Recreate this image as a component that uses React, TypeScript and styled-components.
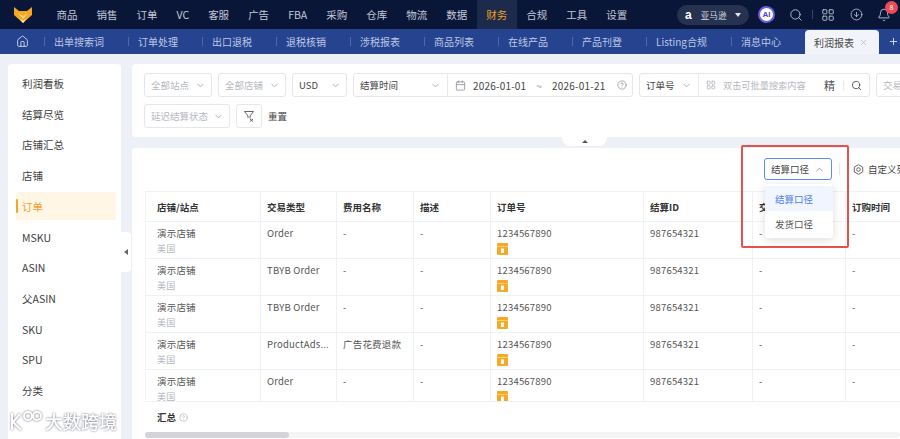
import React from 'react';
import styled, { createGlobalStyle } from 'styled-components';
import { House, X, Plus, ChevronDown, ChevronUp, Calendar, CircleHelp, Search, LayoutGrid, CircleArrowDown, Bell } from 'lucide-react';

const Global = createGlobalStyle`
  html, body { margin: 0; padding: 0; height: 439px; overflow: hidden; background: #eef0f8; }
  * { box-sizing: border-box; }
  body { font-family: "Noto Sans CJK SC", "Noto Sans", sans-serif; font-size: 10px; color: #333; }
`;

const Page = styled.div`
  width: 900px; height: 439px; display: flex; flex-direction: column; overflow: hidden; position: relative;
`;
const TopBar = styled.header`
  height: 29px; flex: none; display: flex; align-items: center; background: #0a1638; color: #c3c9d8;
`;
const Logo = styled.div`
  width: 47px; padding-left: 13px; flex: none; display: flex; align-items: center;
`;
const NavItem = styled.div<{ $active?: boolean }>`
  height: 29px; display: flex; align-items: center; padding: 0 9.5px; font-size: 10.5px; white-space: nowrap;
  color: ${p => (p.$active ? '#f0a11f' : '#c3c9d8')};
  background: ${p => (p.$active ? '#1c2a4c' : 'transparent')};
`;
const TopRight = styled.div`
  margin-left: auto; display: flex; align-items: center; padding-right: 1px; color: #c3c9d8;
`;
const Market = styled.div`
  width: 72px; height: 20px; border-radius: 10px; background: #26324f; display: flex; align-items: center;
  padding-left: 8px; gap: 9px; font-size: 8.6px; color: #d5d9e4; margin-right: 9px;
`;
const AmazonA = styled.span`
  font-family: "Liberation Sans", sans-serif; font-size: 12px; font-weight: 700; color: #fff; line-height: 12px;
`;
const Caret = styled.span`
  width: 0; height: 0; border: 3px solid transparent; border-top: 4px solid #e2e5ee; border-bottom: 0;
`;
const AiBadge = styled.div`
  width: 17px; height: 17px; border-radius: 50%; background: #fff; border: 2px solid #6a5ee8; color: #4b45d8;
  font: 700 8px "Liberation Sans", sans-serif; display: flex; align-items: center; justify-content: center; margin-right: 5px;
`;
const IconSlot = styled.div<{ $w: number }>`
  width: ${p => p.$w}px; display: flex; align-items: center; justify-content: center; position: relative;
`;
const Divider = styled.span`
  width: 1px; height: 9px; background: #3a4564;
`;
const Badge = styled.span`
  position: absolute; top: -7px; right: 1px; width: 13px; height: 13px; border-radius: 50%; background: #ef4b55; color: #fff;
  font-size: 7px; display: flex; align-items: center; justify-content: center;
`;

const TabBar = styled.nav`
  height: 25px; flex: none; display: flex; align-items: flex-end; background: #26438f; color: #bdc9e6;
`;
const HomeTab = styled.div`
  width: 44px; height: 25px; padding-left: 16px; display: flex; align-items: center; color: #d8e0f2; flex: none;
`;
const TabItem = styled.div`
  height: 25px; display: flex; align-items: center; padding: 0 24px 0 10px; position: relative; white-space: nowrap; font-size: 10px; flex: none;
  &::before { content: ''; position: absolute; left: 0; top: 8px; height: 9px; width: 1px; background: #4e68a9; }
`;
const ActiveTab = styled.div`
  width: 74px; height: 24px; background: #f3f4f9; color: #444; border-radius: 4px 4px 0 0; flex: none;
  display: flex; align-items: center; padding-left: 9px; gap: 5px; font-size: 10px;
`;
const AddTab = styled.div`
  margin-left: 9px; height: 25px; display: flex; align-items: center; color: #d8e0f2;
`;

const Main = styled.main`
  flex: 1; min-height: 0; display: flex; padding: 10px 0 0 8px; position: relative;
`;
const Sidebar = styled.aside`
  width: 113px; flex: none; background: #fff; border-radius: 4px 4px 0 0; padding: 5.5px 5px 0 8px;
  display: flex; flex-direction: column; position: relative;
`;
const SideItem = styled.div<{ $active?: boolean }>`
  height: 28px; margin-bottom: 2.73px; display: flex; align-items: center; padding-left: 6px; font-size: 10.5px; border-radius: 3px; position: relative;
  color: ${p => (p.$active ? '#f0a02c' : '#3d3d3d')};
  background: ${p => (p.$active ? '#fff6e6' : 'transparent')};
  ${p => p.$active && `&::before { content: ''; position: absolute; left: 0; top: 7px; width: 2px; height: 14px; background: #f5a623; border-radius: 1px; }`}
`;
const Collapse = styled.div`
  position: absolute; right: -10px; top: 168px; width: 10px; height: 40px; background: #fff; border-radius: 0 4px 4px 0;
  display: flex; align-items: center; justify-content: center;
  &::after { content: ''; border: 3px solid transparent; border-right: 4px solid #666; border-left: 0; }
`;
const Content = styled.section`
  flex: 1; min-width: 0; margin-left: 11px; display: flex; flex-direction: column; gap: 11px; position: relative;
`;
const FilterCard = styled.div`
  height: 73px; flex: none; background: #fff; border-radius: 4px 0 0 4px; padding: 9px 0 0 12px; display: flex; flex-direction: column; gap: 7px; overflow: hidden; position: relative;
`;
const FilterRow = styled.div`
  display: flex; gap: 6px; height: 24px; align-items: stretch; white-space: nowrap;
`;
const Select = styled.div<{ $w: number; $muted?: boolean }>`
  width: ${p => p.$w}px; flex: none; border: 1px solid #e4e6ec; border-radius: 3px; display: flex; align-items: center; justify-content: space-between;
  padding: 0 5px 0 6px; font-size: 9.5px; color: ${p => (p.$muted ? '#b5b8c0' : '#444')};
  svg { color: #a5a8b0; }
`;
const Group = styled.div`
  display: flex; flex: none; border: 1px solid #e4e6ec; border-radius: 3px; align-items: stretch;
`;
const GroupLabel = styled.div<{ $w: number }>`
  width: ${p => p.$w}px; display: flex; align-items: center; justify-content: space-between; padding: 0 6px; font-size: 9.5px; color: #444; border-right: 1px solid #e8eaef;
  svg { color: #a5a8b0; }
`;
const DateField = styled.div`
  width: 184px; display: flex; align-items: center; padding: 0 5px 0 7px; gap: 7px; color: #444; font-size: 10px; letter-spacing: .2px;
  svg { color: #9a9da6; flex: none; }
`;
const Tilde = styled.span`
  color: #999; margin: 0 3px;
`;
const HelpWrap = styled.span`
  margin-left: 5px; display: flex; color: #b9bcc4;
`;
const SearchField = styled.div`
  width: 170px; display: flex; align-items: center; padding: 0 7px; gap: 7px; color: #b5b8c0; font-size: 9.2px;
  svg { flex: none; }
`;
const Exact = styled.span`
  margin-left: auto; margin-right: 1px; color: #555; font-size: 11px;
`;
const SearchDivider = styled.span`
  width: 1px; height: 9px; background: #e4e6ec;
`;
const SearchIcon = styled.span`
  display: flex; color: #555;
`;
const IconButton = styled.div`
  width: 26px; flex: none; border: 1px solid #e4e6ec; border-radius: 3px; display: flex; align-items: center; justify-content: center; color: #666;
`;
const TextButton = styled.div`
  display: flex; align-items: center; font-size: 9.5px; color: #444;
`;
const FoldHandle = styled.div`
  position: absolute; left: 430px; top: 73px; width: 45px; height: 9px; background: #fff; border-radius: 0 0 8px 8px; z-index: 2;
  display: flex; align-items: center; justify-content: center;
  &::after { content: ''; border: 3px solid transparent; border-bottom: 3px solid #555; border-top: 0; }
`;
const TableCard = styled.div`
  flex: 1; min-height: 0; background: #fff; border-radius: 4px 0 0 0; display: flex; flex-direction: column; padding: 0 0 0 13px; position: relative;
`;
const Toolbar = styled.div`
  height: 43px; flex: none; display: flex; align-items: flex-start; padding: 10px 0 0 619px; white-space: nowrap;
`;
const PolicySelect = styled.div`
  width: 68px; height: 22px; flex: none; border: 1px solid #5b8def; border-radius: 3px; display: flex; align-items: center; justify-content: space-between; padding: 0 6px; font-size: 9.5px; color: #444;
  svg { color: #8a8d96; }
`;
const ToolDivider = styled.span`
  width: 1px; height: 12px; background: #e5e7ec; margin: 5px 13px 0 7px; flex: none;
`;
const ColumnSetting = styled.div`
  display: flex; align-items: center; height: 22px; gap: 4px; font-size: 9.5px; color: #444; flex: none;
  svg { color: #666; }
`;
const TableWrap = styled.div`
  height: 210px; flex: none; overflow: hidden;
`;
const Table = styled.table`
  width: 800px; table-layout: fixed; border-collapse: collapse; font-size: 9.5px;
`;
const Th = styled.th`
  height: 30px; text-align: left; font-weight: 700; font-size: 9.5px; color: #333; padding: 0 6px; border: 1px solid #f0f1f4; white-space: nowrap; overflow: hidden;
  &:first-child { padding-left: 11px; }
`;
const Td = styled.td`
  height: 37px; vertical-align: top; padding: 5px 6px 0; border: 1px solid #f0f1f4; color: #555; line-height: 13px; white-space: nowrap; overflow: hidden; letter-spacing: .2px;
  &:first-child { padding-left: 11px; }
`;
const Sub = styled.div`
  color: #b4b6bc; font-size: 9px; margin-top: 2px;
`;
const OrderTag = styled.div`
  width: 11px; height: 12px; margin-top: 3px; display: flex;
`;
const Summary = styled.div`
  height: 31px; flex: none; display: flex; align-items: center; gap: 3px; padding-left: 12px; font-size: 9.5px; font-weight: 700; color: #333; border-top: 1px solid #f0f1f4;
  svg { color: #b5b8c0; }
`;
const ScrollTrack = styled.div`
  height: 6px; flex: none; background: #f3f4f6; border-radius: 3px;
`;
const ScrollThumb = styled.div`
  width: 144px; height: 6px; background: #d2d4d9; border-radius: 3px;
`;
const Menu = styled.div`
  position: absolute; left: 633px; top: 36px; width: 68px; height: 54px; background: #fff; border-radius: 3px; box-shadow: 0 2px 8px rgba(0,0,0,.14); padding: 2px 0; z-index: 3; font-size: 9.5px;
`;
const MenuItem = styled.div<{ $active?: boolean }>`
  height: 25px; display: flex; align-items: center; padding-left: 10px;
  color: ${p => (p.$active ? '#4d7ff0' : '#555')};
  background: ${p => (p.$active ? '#f0f5ff' : '#fff')};
`;
const RedBox = styled.div`
  position: absolute; left: 609px; top: -3px; width: 108px; height: 103px; border: 2px solid #e5514b; border-radius: 2px; z-index: 4; pointer-events: none;
`;
const Watermark = styled.div`
  position: absolute; left: 8px; bottom: 6px; height: 24px; display: flex; align-items: center; gap: 3px; color: #fff; font-size: 18px; font-weight: 500; z-index: 5;
  filter: drop-shadow(0 0 1px rgba(90,95,110,.9));
`;

const nav = ['商品', '销售', '订单', 'VC', '客服', '广告', 'FBA', '采购', '仓库', '物流', '数据', '财务', '合规', '工具', '设置'];
const tabs = ['出单搜索词', '订单处理', '出口退税', '退税核销', '涉税报表', '商品列表', '在线产品', '产品刊登', 'Listing合规', '消息中心'];
const side = ['利润看板', '结算尽览', '店铺汇总', '店铺', '订单', 'MSKU', 'ASIN', '父ASIN', 'SKU', 'SPU', '分类'];
const columns = [{ t: '店铺/站点', w: 115 }, { t: '交易类型', w: 76 }, { t: '费用名称', w: 77 }, { t: '描述', w: 77 }, { t: '订单号', w: 153 }, { t: '结算ID', w: 109 }, { t: '交易时间', w: 93 }, { t: '订购时间', w: 100 }];
const rows = [
  { type: 'Order', fee: '-', dash: '-' },
  { type: 'TBYB Order', fee: '-', dash: '-' },
  { type: 'TBYB Order', fee: '-', dash: '-' },
  { type: 'ProductAds...', fee: '广告花费退款', dash: '-' },
  { type: 'Order', fee: '-', dash: '-' },
];

export default function App() {
  return (
    <Page>
      <Global />
      <TopBar>
        <Logo>
          <svg width="20" height="18" viewBox="0 0 20 18">
            <path d="M1 1 L6 5 H14 L19 1 V9 L10 17 L1 9 Z" fill="#f5a623" />
            <path d="M5 7 L10 10 L15 7 L10 13 Z" fill="#ffd98a" />
            <path d="M7 13 L10 17 L13 13 L10 15 Z" fill="#fff" />
          </svg>
        </Logo>
        {nav.map(n => <NavItem key={n} $active={n === '财务'}>{n}</NavItem>)}
        <TopRight>
          <Market><AmazonA>a</AmazonA>亚马逊<Caret /></Market>
          <AiBadge>AI</AiBadge>
          <IconSlot $w={32}><Search size={14} strokeWidth={1.5} /></IconSlot>
          <Divider />
          <IconSlot $w={30}><LayoutGrid size={14} strokeWidth={1.5} /></IconSlot>
          <IconSlot $w={26}><CircleArrowDown size={13} strokeWidth={1.5} /></IconSlot>
          <IconSlot $w={30}><Bell size={14} strokeWidth={1.5} /><Badge>8</Badge></IconSlot>
        </TopRight>
      </TopBar>
      <TabBar>
        <HomeTab><House size={13} strokeWidth={1.6} /></HomeTab>
        {tabs.map(t => <TabItem key={t}>{t}</TabItem>)}
        <ActiveTab>利润报表<X size={9} color="#b5b8c0" /></ActiveTab>
        <AddTab><Plus size={11} /></AddTab>
      </TabBar>
      <Main>
        <Sidebar>
          {side.map(s => <SideItem key={s} $active={s === '订单'}>{s}</SideItem>)}
          <Collapse />
        </Sidebar>
        <Content>
          <FilterCard>
            <FilterRow>
              <Select $w={68} $muted>全部站点<ChevronDown size={11} /></Select>
              <Select $w={68} $muted>全部店铺<ChevronDown size={11} /></Select>
              <Select $w={55}>USD<ChevronDown size={11} /></Select>
              <Group>
                <GroupLabel $w={94}>结算时间<ChevronDown size={11} /></GroupLabel>
                <DateField>
                  <Calendar size={11} />2026-01-01<Tilde>~</Tilde>2026-01-21
                  <HelpWrap><CircleHelp size={10} /></HelpWrap>
                </DateField>
              </Group>
              <Group>
                <GroupLabel $w={59}>订单号<ChevronDown size={11} /></GroupLabel>
                <SearchField>
                  <LayoutGrid size={10} />双击可批量搜索内容
                  <Exact>精</Exact><SearchDivider /><SearchIcon><Search size={11} /></SearchIcon>
                </SearchField>
              </Group>
              <Select $w={60} $muted>交易类型</Select>
            </FilterRow>
            <FilterRow>
              <Select $w={86} $muted>延迟结算状态<ChevronDown size={11} /></Select>
              <IconButton>
                <svg width="12" height="12" viewBox="0 0 12 12" fill="none" stroke="currentColor" strokeWidth="1">
                  <path d="M1.5 1.5 H10.5 L7 6 V8.5 M5 8 V6 L1.5 1.5" />
                  <path d="M7 9 L10 11.5 M10 9 L7 11.5" />
                </svg>
              </IconButton>
              <TextButton>重置</TextButton>
            </FilterRow>
          </FilterCard>
          <FoldHandle />
          <TableCard>
            <Toolbar>
              <PolicySelect>结算口径<ChevronUp size={11} /></PolicySelect>
              <ToolDivider />
              <ColumnSetting>
                <svg width="11" height="11" viewBox="0 0 11 11" fill="none" stroke="currentColor" strokeWidth="1">
                  <path d="M5.5 .7 L9.7 3.1 V7.9 L5.5 10.3 L1.3 7.9 V3.1 Z" />
                  <circle cx="5.5" cy="5.5" r="1.8" />
                </svg>
                自定义列
              </ColumnSetting>
            </Toolbar>
            <Menu>
              <MenuItem $active>结算口径</MenuItem>
              <MenuItem>发货口径</MenuItem>
            </Menu>
            <RedBox />
            <TableWrap>
              <Table>
                <colgroup>{columns.map(c => <col key={c.t} width={c.w} />)}</colgroup>
                <thead><tr>{columns.map(c => <Th key={c.t}>{c.t}</Th>)}</tr></thead>
                <tbody>
                  {rows.map((r, i) => (
                    <tr key={i}>
                      <Td>演示店铺<Sub>美国</Sub></Td>
                      <Td>{r.type}</Td>
                      <Td>{r.fee}</Td>
                      <Td>{r.dash}</Td>
                      <Td>
                        1234567890
                        <OrderTag>
                          <svg width="11" height="12" viewBox="0 0 11 12">
                            <rect width="11" height="12" rx="1" fill="#f9a825" />
                            <rect y="3" width="11" height="1" fill="#ffd27a" />
                            <rect x="4" y="5.5" width="3" height="4.5" fill="#fff" />
                          </svg>
                        </OrderTag>
                      </Td>
                      <Td>987654321</Td>
                      <Td>-</Td>
                      <Td>-</Td>
                    </tr>
                  ))}
                </tbody>
              </Table>
            </TableWrap>
            <Summary>汇总<CircleHelp size={9} /></Summary>
            <ScrollTrack><ScrollThumb /></ScrollTrack>
          </TableCard>
        </Content>
        <Watermark>
          <svg width="34" height="22" viewBox="0 0 34 22" fill="none" stroke="#fff" strokeWidth="2">
            <path d="M4 3 V20 M5 12 L12 4 M5 12 L13 20" />
            <circle cx="20" cy="6" r="4" />
            <circle cx="29" cy="6" r="4" />
          </svg>
          大数跨境
        </Watermark>
      </Main>
    </Page>
  );
}
